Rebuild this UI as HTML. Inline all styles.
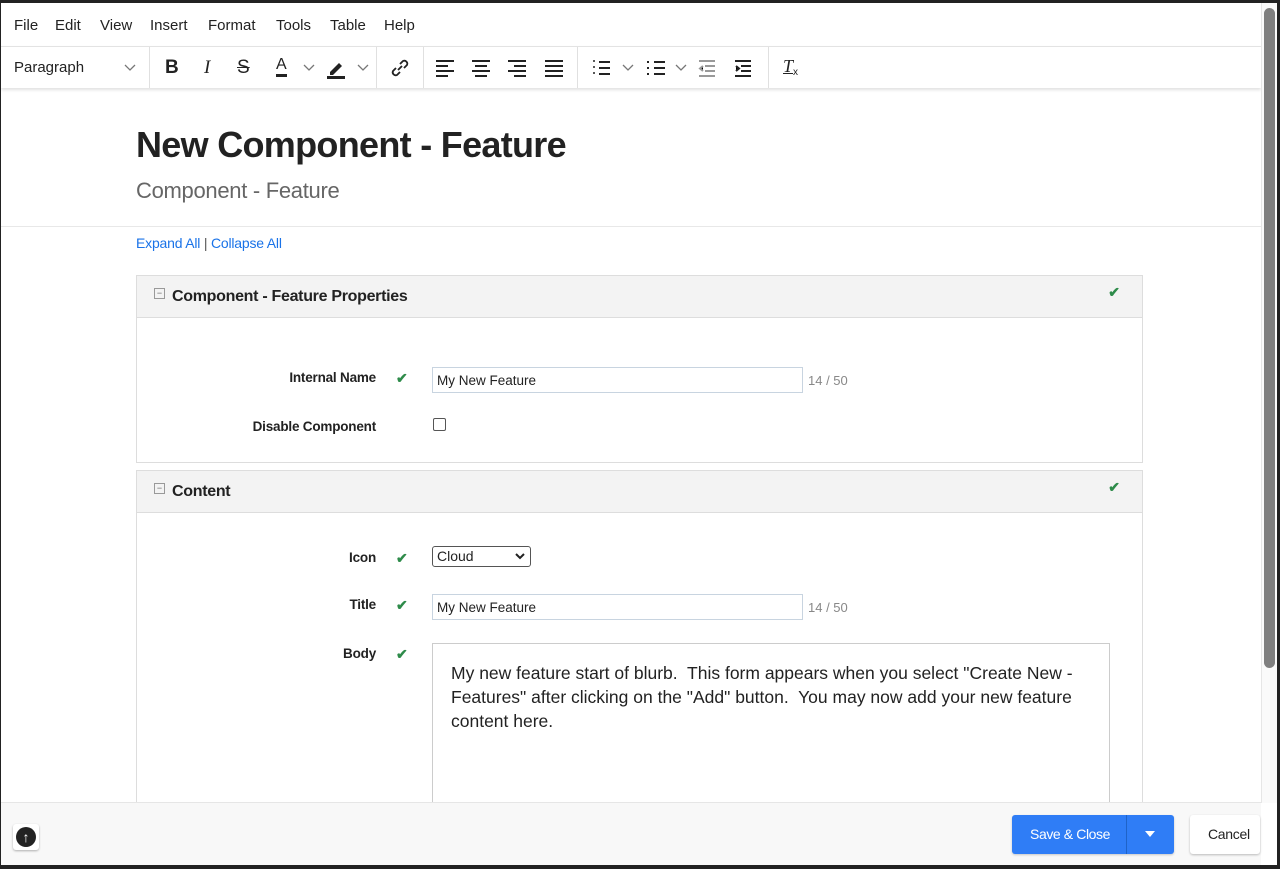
<!DOCTYPE html>
<html><head><style>
*{box-sizing:border-box;margin:0;padding:0}
body{width:1280px;height:869px;background:#222;position:relative;overflow:hidden;font-family:"Liberation Sans",sans-serif;color:#222}
.a{position:absolute}
#win{left:1px;top:3px;width:1276px;height:862px;background:#fff;overflow:hidden}
.menu span{position:absolute;top:14px;font-size:15px;color:#222}
.tb{top:43px;left:0;width:1260px;height:42px;border-top:1px solid #e3e3e3;box-shadow:0 2px 3px rgba(0,0,0,.12);background:#fff}
.sep{position:absolute;top:0;width:1px;height:41px;background:#e0e0e0}
.lbl{position:absolute;font-weight:bold;font-size:13.5px;text-align:right;width:240px;color:#222;letter-spacing:-.2px}
.chk{position:absolute;color:#2e8b4a;font-size:14px;font-weight:bold}
.inp{position:absolute;border:1px solid #c8d4e0;height:26px;font-size:13.5px;padding:5px 4px;color:#222}
.cnt{position:absolute;font-size:13px;color:#888}
.panel{position:absolute;left:135px;width:1007px;border:1px solid #ddd;background:#fff}
.ph{height:42px;background:#f3f3f3;border-bottom:1px solid #ddd;position:relative}
.ph .t{position:absolute;left:35px;top:12px;font-size:16px;font-weight:bold;color:#222;letter-spacing:-.3px}
.ph .m{position:absolute;left:17px;top:12px;width:11px;height:11px;border:1px solid #999;font-size:9px;line-height:8px;text-align:center;color:#666}
.ph .c{position:absolute;right:22px;top:8px;color:#2e8b4a;font-weight:bold;font-size:14px}
</style></head><body>
<div id="win" class="a">
 <div class="menu">
  <span style="left:13px">File</span><span style="left:54px">Edit</span><span style="left:99px">View</span><span style="left:149px">Insert</span><span style="left:207px">Format</span><span style="left:275px">Tools</span><span style="left:329px">Table</span><span style="left:383px">Help</span>
 </div>
 <div class="a tb">
  <span class="a" style="left:13px;top:12px;font-size:15px">Paragraph</span>
  <svg class="a" style="left:123px;top:17px" width="12" height="8"><path d="M1 1l5 5 5-5" stroke="#777" fill="none" stroke-width="1.3"/></svg>
  <div class="sep" style="left:148px"></div>
  <span class="a" style="left:164px;top:10px;font-size:19px;font-weight:bold">B</span>
  <span class="a" style="left:203px;top:10px;font-size:19px;font-style:italic;font-family:'Liberation Serif',serif">I</span>
  <span class="a" style="left:236px;top:10px;font-size:19px;text-decoration:line-through">S</span>
  <span class="a" style="left:275px;top:9px;font-size:16px;border-bottom:3px solid #222;line-height:18px">A</span>
  <svg class="a" style="left:302px;top:17px" width="12" height="8"><path d="M1 1l5 5 5-5" stroke="#777" fill="none" stroke-width="1.3"/></svg>
  <svg class="a" style="left:324px;top:10px" width="22" height="22"><path d="M5 15l9-9 3 3-9 9H5z" fill="#222"/><rect x="2" y="19" width="18" height="3" fill="#222"/></svg>
  <svg class="a" style="left:356px;top:17px" width="12" height="8"><path d="M1 1l5 5 5-5" stroke="#777" fill="none" stroke-width="1.3"/></svg>
  <div class="sep" style="left:375px"></div>
  <svg class="a" style="left:388px;top:10px" width="22" height="22"><path d="M9 13l4-4M7 11l-3 3a3 3 0 004 4l3-3M15 11l3-3a3 3 0 00-4-4l-3 3" stroke="#222" fill="none" stroke-width="1.8"/></svg>
  <div class="sep" style="left:422px"></div>
  <svg class="a" style="left:434px;top:12px" width="140" height="18" stroke="#222" stroke-width="2">
   <path d="M1 2h18M1 7h12M1 12h18M1 17h12"/>
   <path d="M37 2h18M40 7h12M37 12h18M40 17h12"/>
   <path d="M73 2h18M79 7h12M73 12h18M79 17h12"/>
   <path d="M110 2h18M110 7h18M110 12h18M110 17h18"/>
  </svg>
  <div class="sep" style="left:576px"></div>
  <svg class="a" style="left:591px;top:12px" width="170" height="18" stroke="#222" stroke-width="2">
   <path d="M7 3h11M7 9h11M7 15h11"/><path d="M1 2h2M1 8h2M1 14h2" stroke-width="1.5"/>
   <path d="M31 6l5 5 5-5" stroke="#777" stroke-width="1.3" fill="none"/>
   <path d="M62 3h11M62 9h11M62 15h11M55 3h2M55 9h2M55 15h2"/>
   <path d="M84 6l5 5 5-5" stroke="#777" stroke-width="1.3" fill="none"/>
   <path d="M107 2h16M113 7h10M113 12h10M107 17h16M111 7l-3 2.5 3 2.5" stroke="#999"/>
   <path d="M143 2h16M149 7h10M149 12h10M143 17h16M144 7l3 2.5-3 2.5"/>
  </svg>
  <div class="sep" style="left:767px"></div>
  <span class="a" style="left:782px;top:9px;font-size:18px;font-style:italic;text-decoration:underline;font-family:'Liberation Serif',serif">T</span><span class="a" style="left:792px;top:20px;font-size:10px">x</span>
 </div>
 <div class="a" style="left:135px;top:121px;font-size:36px;font-weight:bold;color:#222;letter-spacing:-.7px">New Component - Feature</div>
 <div class="a" style="left:135px;top:175px;font-size:22px;color:#666;letter-spacing:-.3px">Component - Feature</div>
 <div class="a" style="left:0;top:223px;width:1260px;height:1px;background:#e8e8e8"></div>
 <div class="a" style="left:135px;top:232px;font-size:14px;color:#1a73e8;letter-spacing:-.2px">Expand All <span style="color:#555">|</span> Collapse All</div>
 <div class="panel" style="top:272px;height:188px">
  <div class="ph"><div class="m">−</div><div class="t">Component - Feature Properties</div><div class="c">✔</div></div>
 </div>
 <div class="lbl" style="left:135px;top:367px">Internal Name</div><div class="chk" style="left:395px;top:367px">✔</div>
 <div class="inp" style="left:431px;top:364px;width:371px">My New Feature</div><div class="cnt" style="left:807px;top:370px">14 / 50</div>
 <div class="lbl" style="left:135px;top:416px">Disable Component</div>
 <div class="a" style="left:432px;top:415px;width:13px;height:13px;border:1px solid #555;border-radius:2px"></div>
 <div class="panel" style="top:467px;height:400px">
  <div class="ph"><div class="m">−</div><div class="t">Content</div><div class="c">✔</div></div>
 </div>
 <div class="lbl" style="left:135px;top:547px">Icon</div><div class="chk" style="left:395px;top:547px">✔</div>
 <div class="a" style="left:431px;top:543px;width:99px;height:21px;border:1px solid #555;border-radius:3px;font-size:14px;padding:1px 4px">Cloud<svg style="position:absolute;right:5px;top:6px" width="10" height="7"><path d="M1 1l4 4 4-4" stroke="#222" stroke-width="2" fill="none"/></svg></div>
 <div class="lbl" style="left:135px;top:594px">Title</div><div class="chk" style="left:395px;top:594px">✔</div>
 <div class="inp" style="left:431px;top:591px;width:371px">My New Feature</div><div class="cnt" style="left:807px;top:597px">14 / 50</div>
 <div class="lbl" style="left:135px;top:643px">Body</div><div class="chk" style="left:395px;top:643px">✔</div>
 <div class="a" style="left:431px;top:640px;width:678px;height:200px;border:1px solid #ccc;padding:17px 18px;font-size:17.5px;line-height:24px;color:#222">My new feature start of blurb.&nbsp; This form appears when you select "Create New - Features" after clicking on the "Add" button.&nbsp; You may now add your new feature content here.</div>
 <div class="a" style="left:0;top:799px;width:1260px;height:63px;background:#f8f8f8;border-top:1px solid #e6e6e6">
  <div class="a" style="left:12px;top:21px;width:26px;height:26px;background:#fff;box-shadow:0 1px 2px rgba(0,0,0,.3);border-radius:3px"><div style="margin:3px;width:20px;height:20px;border-radius:50%;background:#222;color:#fff;font-size:14px;text-align:center;line-height:20px;font-weight:bold">↑</div></div>
  <div class="a" style="left:1011px;top:12px;width:162px;height:39px;background:#2f7df6;border-radius:3px;box-shadow:0 1px 2px rgba(0,0,0,.2)">
   <span class="a" style="left:18px;top:11px;color:#fff;font-size:14px;letter-spacing:-.4px">Save &amp; Close</span>
   <div class="a" style="left:114px;top:0;width:1px;height:39px;background:#1f63c8"></div>
   <svg class="a" style="left:133px;top:16px" width="10" height="7"><path d="M0 0h10L5 6z" fill="#fff"/></svg>
  </div>
  <div class="a" style="left:1189px;top:12px;width:70px;height:39px;background:#fff;border-radius:3px;box-shadow:0 1px 2px rgba(0,0,0,.25);font-size:14px;padding:11px 0 0 18px;letter-spacing:-.3px">Cancel</div>
 </div>
 <div class="a" style="left:1260px;top:0;width:16px;height:800px;background:#fafafa;border-left:1px solid #e6e6e6"><div style="margin:5px 2px;width:11px;height:660px;background:#7f7f7f;border-radius:6px"></div></div>
</div>
</body></html>
